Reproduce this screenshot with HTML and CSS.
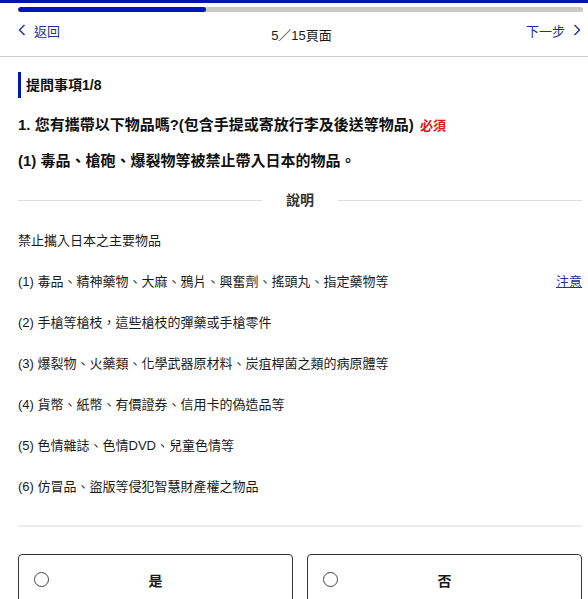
FILE: index.html
```html
<!DOCTYPE html>
<html lang="zh-Hant">
<head>
<meta charset="utf-8">
<link rel="stylesheet" href="styles.css">
</head>
<body>
<div class="topline"></div>
<div class="progress"><div class="progress-fill"></div></div>
<div class="nav">
  <a class="nav-link" href="#">
    <svg class="chev" width="8" height="12" viewBox="0 0 8 12"><polyline points="6.5,1 1.5,6 6.5,11" fill="none" stroke="#1c2f9c" stroke-width="1.4"/></svg>
    <span>返回</span>
  </a>
  <div class="nav-page">5／15頁面</div>
  <a class="nav-link nav-next" href="#">
    <span>下一步</span>
    <svg class="chev" width="8" height="12" viewBox="0 0 8 12"><polyline points="1.5,1 6.5,6 1.5,11" fill="none" stroke="#1c2f9c" stroke-width="1.4"/></svg>
  </a>
</div>
<div class="main">
  <h2 class="section-title">提問事項1/8</h2>
  <p class="question">1. 您有攜帶以下物品嗎?(包含手提或寄放行李及後送等物品) <span class="required">必須</span></p>
  <p class="question-sub">(1) 毒品、槍砲、爆裂物等被禁止帶入日本的物品。</p>
  <div class="divider"><span>說明</span></div>
  <ul class="list">
    <li>禁止攜入日本之主要物品</li>
    <li class="list-row"><span>(1) 毒品、精神藥物、大麻、鴉片、興奮劑、搖頭丸、指定藥物等</span><a class="note" href="#">注意</a></li>
    <li>(2) 手槍等槍枝，這些槍枝的彈藥或手槍零件</li>
    <li>(3) 爆裂物、火藥類、化學武器原材料、炭疽桿菌之類的病原體等</li>
    <li>(4) 貨幣、紙幣、有價證券、信用卡的偽造品等</li>
    <li>(5) 色情雜誌、色情DVD、兒童色情等</li>
    <li>(6) 仿冒品、盜版等侵犯智慧財產權之物品</li>
  </ul>
  <hr class="rule">
  <div class="options">
    <label class="option"><span class="radio"></span><span class="option-text">是</span></label>
    <label class="option"><span class="radio"></span><span class="option-text">否</span></label>
  </div>
</div>
</body>
</html>
```

FILE: styles.css
```css
body {
  margin: 0;
  font-family: "Liberation Sans", "Noto Sans CJK TC", sans-serif;
  color: #1a1a1a;
  background: #fff;
}

.topline {
  height: 3px;
  background-color: #0016a6;
}

.progress {
  height: 5px;
  margin: 4px 5px 0 18px;
  border-radius: 3px;
  background-color: #c9c9cc;
  overflow: hidden;
}

.progress-fill {
  width: 33.3%;
  height: 100%;
  border-radius: 3px;
  background-color: #0016b8;
}

.nav {
  display: flex;
  align-items: center;
  justify-content: space-between;
  height: 44px;
  padding: 0 7px 0 18px;
  border-bottom: 1px solid #cfcfcf;
  font-size: 13px;
}

.nav-link {
  display: flex;
  align-items: center;
  gap: 8px;
  color: #1c2f9c;
  text-decoration: none;
  width: 60px;
  margin-top: -8px;
}

.nav-next {
  justify-content: flex-end;
}

.nav-page {
  color: #1a1a1a;
  margin-left: 4px;
}

.main {
  padding: 0 6px 0 18px;
}

.section-title {
  margin: 15px 0 0;
  height: 26px;
  line-height: 26px;
  padding-left: 5px;
  border-left: 3px solid #0016b8;
  font-size: 14px;
  font-weight: bold;
  color: #111;
}

.question {
  margin: 16px 0 0;
  line-height: 22px;
  font-size: 15px;
  font-weight: bold;
  color: #111;
}

.required {
  margin-left: 2px;
  font-size: 13px;
  color: #d71a1a;
}

.question-sub {
  margin: 13px 0 0;
  line-height: 22px;
  font-size: 15px;
  font-weight: bold;
  color: #111;
}

.divider {
  display: flex;
  align-items: center;
  gap: 24px;
  margin-top: 18px;
  line-height: 20px;
  font-size: 14px;
  font-weight: bold;
  color: #333;
}

.divider::before,
.divider::after {
  content: "";
  flex: 1;
  border-top: 1px solid #dedede;
}

.list {
  list-style: none;
  margin: 10px 0 0;
  padding: 0;
  font-size: 13px;
  color: #1a1a1a;
}

.list li {
  line-height: 41px;
}

.list-row {
  display: flex;
  justify-content: space-between;
}

.note {
  color: #1c2f9c;
  text-decoration: underline;
}

.rule {
  margin: 18px 0 0;
  border: none;
  border-top: 2px solid #ececec;
}

.options {
  display: grid;
  grid-template-columns: 1fr 1fr;
  gap: 14px;
  margin-top: 27px;
}

.option {
  position: relative;
  display: flex;
  align-items: center;
  justify-content: center;
  height: 50px;
  border: 1px solid #333;
  border-radius: 4px;
  font-size: 14px;
  font-weight: bold;
}

.radio {
  position: absolute;
  left: 15px;
  top: 17px;
  width: 13px;
  height: 13px;
  border: 1px solid #444;
  border-radius: 50%;
}
```
